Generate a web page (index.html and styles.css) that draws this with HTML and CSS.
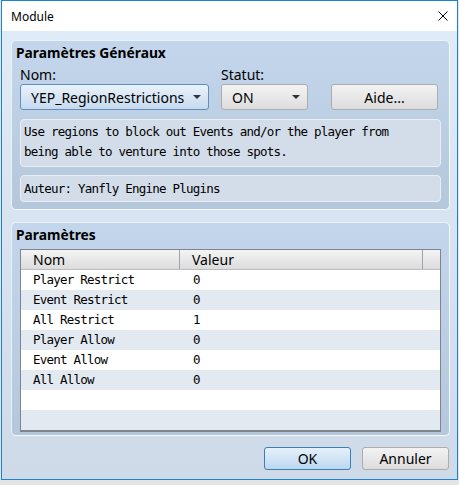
FILE: index.html
```html
<!DOCTYPE html>
<html lang="fr">
<head>
    <meta charset="UTF-8">
    <title>Module</title>
    <link rel="stylesheet" href="styles.css">
</head>
<body>
    <div class="window">
        <div class="titlebar">
            <span class="title">Module</span>
            <svg class="close" width="10" height="10" viewBox="0 0 10 10">
                <path d="M0.5 0.5 L9.5 9.5 M9.5 0.5 L0.5 9.5" stroke="#000" stroke-width="1" fill="none"/>
            </svg>
        </div>
        <div class="content">
            <div class="group general">
                <div class="group-title">Paramètres Généraux</div>
                <div class="fields">
                    <div class="field name-field">
                        <label>Nom:</label>
                        <div class="combo focused">
                            <span>YEP_RegionRestrictions</span>
                            <span class="arrow"></span>
                        </div>
                    </div>
                    <div class="field status-field">
                        <label>Statut:</label>
                        <div class="combo">
                            <span>ON</span>
                            <span class="arrow"></span>
                        </div>
                    </div>
                    <div class="field help-field">
                        <button class="btn">Aide...</button>
                    </div>
                </div>
                <div class="info description">Use regions to block out Events and/or the player from
being able to venture into those spots.</div>
                <div class="info author">Auteur: Yanfly Engine Plugins</div>
            </div>

            <div class="group params">
                <div class="group-title">Paramètres</div>
                <div class="table">
                    <div class="thead">
                        <div class="th col-name">Nom</div>
                        <div class="th col-value">Valeur</div>
                        <div class="th col-pad"></div>
                    </div>
                    <div class="row"><span class="col-name">Player Restrict</span><span class="col-value">0</span></div>
                    <div class="row"><span class="col-name">Event Restrict</span><span class="col-value">0</span></div>
                    <div class="row"><span class="col-name">All Restrict</span><span class="col-value">1</span></div>
                    <div class="row"><span class="col-name">Player Allow</span><span class="col-value">0</span></div>
                    <div class="row"><span class="col-name">Event Allow</span><span class="col-value">0</span></div>
                    <div class="row"><span class="col-name">All Allow</span><span class="col-value">0</span></div>
                    <div class="row"></div>
                    <div class="row"></div>
                </div>
            </div>

            <div class="buttons">
                <button class="btn default">OK</button>
                <button class="btn">Annuler</button>
            </div>
        </div>
    </div>
</body>
</html>
```

FILE: styles.css
```css
body {
    margin: 0;
    background-color: #e4e4e4;
    font-family: 'Noto Sans', 'Open Sans', sans-serif;
    font-size: 14px;
    color: #000;
}
.window {
    margin-left: 1px;
    width: 455px;
    border: 1px solid #1883d7;
    background: #fff;
}
.titlebar {
    height: 30px;
    display: flex;
    align-items: center;
    justify-content: space-between;
    padding: 0 9px 0 9px;
    background: #fff;
}
.title {
    font-size: 12px;
}
.close {
    display: block;
    margin-top: -1px;
}
.content {
    padding: 9px 7px 9px 9px;
    background: linear-gradient(#e0ebf8, #cedae7);
    display: flex;
    flex-direction: column;
}
.group {
    border-radius: 5px;
    border-top: 1px solid #eaf1fa;
    border-left: 1px solid #eaf1fa;
    border-right: 1px solid #f4f8fc;
    border-bottom: 1px solid #f4f8fc;
    background: linear-gradient(#c4d6eb, #b5c7db);
    padding: 3px 8px 7px 8px;
    display: flex;
    flex-direction: column;
}
.general {
    height: 158px;
}
.params {
    margin-top: 12px;
    height: 202px;
}
.group-title {
    font-weight: bold;
    font-size: 13.8px;
    height: 18px;
    line-height: 18px;
    margin-left: -4px;
}
.fields {
    display: flex;
    margin-top: 4px;
}
.field {
    display: flex;
    flex-direction: column;
}
.field label {
    height: 18px;
    line-height: 18px;
}
.name-field {
    width: 189px;
}
.status-field {
    width: 87px;
    margin-left: 12px;
}
.help-field {
    width: 107px;
    margin-left: 23px;
    justify-content: flex-end;
}
.combo {
    height: 24px;
    border: 1px solid #adadad;
    border-radius: 3px;
    background: linear-gradient(#f3f3f3, #dddddd);
    display: flex;
    align-items: center;
    justify-content: space-between;
    padding: 0 7px 0 10px;
}
.combo.focused {
    border-color: #5f8fc2;
    background: linear-gradient(#e9f2fb, #c6daee);
}
.arrow {
    width: 0;
    height: 0;
    border-left: 4px solid transparent;
    border-right: 4px solid transparent;
    border-top: 4px solid #333;
}
.btn {
    font-family: 'Noto Sans', 'Open Sans', sans-serif;
    font-size: 14px;
    color: #000;
    height: 26px;
    border: 1px solid #adadad;
    border-radius: 3px;
    background: linear-gradient(#f3f3f3, #dcdcdc);
    padding: 0;
}
.info {
    margin-top: 9px;
    border: 1px solid #e8eef6;
    border-radius: 4px;
    background: #d2dde9;
    font-family: 'DejaVu Sans Mono', monospace;
    font-size: 12.5px;
    letter-spacing: -0.78px;
    padding: 0 3px;
}
.description {
    line-height: 20px;
    padding-top: 2px;
    white-space: pre-line;
    box-sizing: border-box;
    height: 48px;
}
.author {
    margin-top: 8px;
    height: 25px;
    line-height: 25px;
}
.table {
    margin-top: 5px;
    border: 1px solid #7d8590;
    border-bottom-width: 2px;
    background: #fff;
}
.thead {
    display: flex;
    height: 19px;
    border-bottom: 1px solid #b8bdc4;
    background: linear-gradient(#f4f4f4, #dcdcdc);
}
.th {
    line-height: 19px;
    box-sizing: border-box;
}
.col-name {
    width: 159px;
    padding-left: 12px;
    box-sizing: border-box;
}
.thead .col-name {
    border-right: 1px solid #a0a4aa;
}
.col-value {
    padding-left: 12px;
    box-sizing: border-box;
}
.thead .col-value {
    flex: 1;
    border-right: 1px solid #a0a4aa;
}
.col-pad {
    width: 17px;
}
.row {
    display: flex;
    height: 20px;
    line-height: 20px;
    font-family: 'DejaVu Sans Mono', monospace;
    font-size: 12.5px;
    letter-spacing: -0.78px;
}
.row:nth-of-type(odd) {
    background: #e3e9f1;
}
.row .col-name {
    width: 160px;
}
.buttons {
    display: flex;
    justify-content: flex-end;
    gap: 11px;
    margin-top: 11px;
    margin-right: 1px;
}
.buttons .btn {
    width: 87px;
    height: 23px;
}
.btn.default {
    border-color: #3c7fb1;
    background: linear-gradient(#e5f1fb, #bcd7f0);
}
```
